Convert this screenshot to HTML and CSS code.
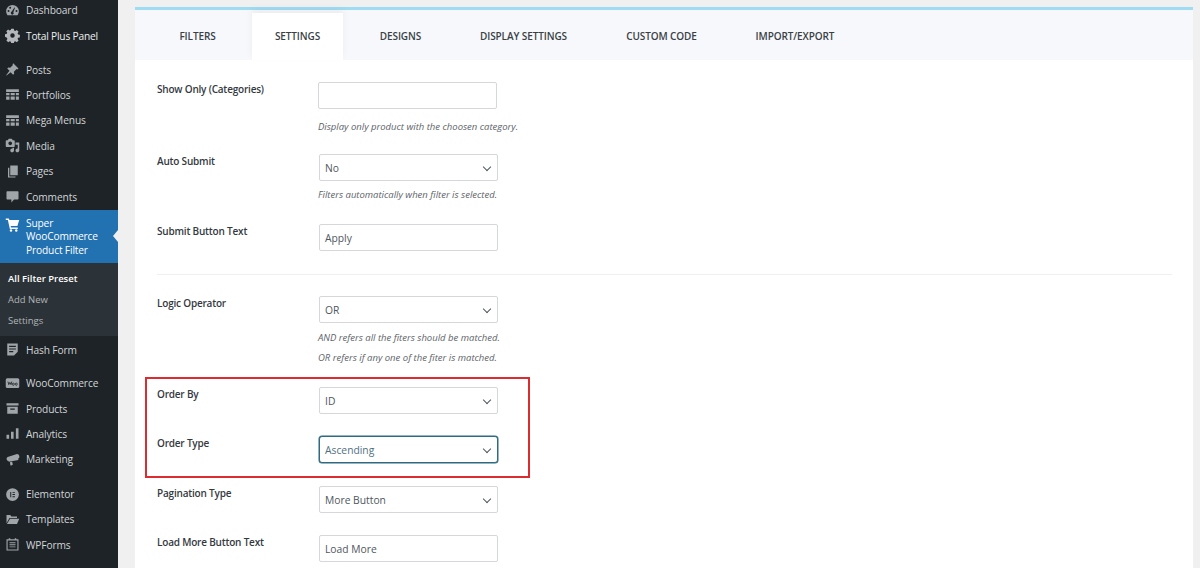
FILE: index.html
```html
<!DOCTYPE html>
<html lang="en">
<head>
<meta charset="utf-8">
<title>Super WooCommerce Product Filter</title>
<link rel="stylesheet" href="styles.css">
</head>
<body>
<div class="page">
<nav class="sidebar">
  <ul class="menu">
    <li class="item first"><svg class="ico" viewBox="0 0 20 20"><path fill-rule="evenodd" d="M10 2.500a8.500 8.500 0 0 0-8.500 8.500c0 2 .7 3.800 1.800 5.200h13.400c1.100-1.400 1.800-3.200 1.800-5.200A8.500 8.500 0 0 0 10 2.500zM4.700 12a1.300 1.300 0 1 1 0-2.600 1.300 1.300 0 0 1 0 2.600zm2.200-4.300a1.300 1.300 0 1 1 0-2.600 1.300 1.300 0 0 1 0 2.600zM10 15.500a2.200 2.200 0 0 1-1-4.200l3.600-5.400.8.400-2.300 5.900A2.200 2.200 0 0 1 10 15.500zm5.300-3.500a1.300 1.300 0 1 1 0-2.600 1.300 1.300 0 0 1 0 2.600z"/></svg><span>Dashboard</span></li>
    <li class="item bright"><svg class="ico" viewBox="0 0 20 20"><path fill-rule="evenodd" d="M8.300 1h3.400l.5 2.400 1.500.6 2-1.300 2.400 2.400-1.300 2 .6 1.500 2.400.5v3.400l-2.400.5-.6 1.500 1.300 2-2.400 2.400-2-1.300-1.500.6-.5 2.400H8.300l-.5-2.400-1.500-.6-2 1.300-2.400-2.400 1.300-2-.6-1.500L0 11.700V8.300l2.400-.5.6-1.500-1.300-2 2.400-2.400 2 1.300 1.500-.6zM10 7a3 3 0 1 0 0 6 3 3 0 0 0 0-6z"/></svg><span>Total Plus Panel</span></li>
    <li class="item sep"><svg class="ico" viewBox="0 0 20 20"><path d="M11 1.500l7 7-1.500 1.500-1-.6-3.700 3.700.4 2.500-1.400 1.400-3.200-3.200L2 18l-.5-.5 4.500-5.800-3-3L4.400 7.300l2.500.4 3.700-3.700-.6-1z"/></svg><span>Posts</span></li>
    <li class="item"><svg class="ico" viewBox="0 0 20 20"><path d="M1.500 3h17v3.500h-17zM1.500 8H6v3H1.500zm6 0H13v3H7.500zM14.500 8h4v3h-4zM1.500 12.500H6V17H1.500zm6 0H13V17H7.500zm7 0h4V17h-4z"/></svg><span>Portfolios</span></li>
    <li class="item"><svg class="ico" viewBox="0 0 20 20"><path d="M1.500 3h17v3.500h-17zM1.500 8H6v3H1.500zm6 0H13v3H7.500zM14.500 8h4v3h-4zM1.500 12.500H6V17H1.500zm6 0H13V17H7.500zm7 0h4V17h-4z"/></svg><span>Mega Menus</span></li>
    <li class="item"><svg class="ico" viewBox="0 0 20 20"><path fill-rule="evenodd" d="M13 11V4c0-.55-.45-1-1-1h-1.670L9 1H5L3.670 3H2c-.55 0-1 .45-1 1v7c0 .55.45 1 1 1h10c.55 0 1-.45 1-1zM7 4.500c1.380 0 2.500 1.120 2.500 2.500S8.380 9.500 7 9.500 4.500 8.380 4.500 7 5.620 4.500 7 4.500zM14 6h5v10.500c0 1.380-1.120 2.500-2.500 2.500S14 17.880 14 16.500s1.120-2.500 2.500-2.500c.17 0 .34.02.5.050V9h-3V6zm-4 8.050V13h2v3.500c0 1.380-1.120 2.500-2.500 2.500S7 17.880 7 16.500 8.120 14 9.500 14c.17 0 .34.02.5.050z"/></svg><span>Media</span></li>
    <li class="item"><svg class="ico" viewBox="0 0 20 20"><path d="M7 2h10v13H7zM4 5h1.800v11.500H14V18H4z"/></svg><span>Pages</span></li>
    <li class="item"><svg class="ico" viewBox="0 0 20 20"><path d="M3 3h14a1 1 0 0 1 1 1v9a1 1 0 0 1-1 1h-5l-3.500 4v-4H3a1 1 0 0 1-1-1V4a1 1 0 0 1 1-1z"/></svg><span>Comments</span></li>
    <li class="current">
      <svg class="ico" viewBox="0 0 20 20"><path d="M1 2h4l1 2h13l-2.500 8H7.500l.6 2H17v2H6.500L3.800 4H1z"/><circle cx="8" cy="18" r="1.600"/><circle cx="15" cy="18" r="1.600"/></svg>
      <span>Super WooCommerce Product Filter</span>
      <i class="notch"></i>
    </li>
    <li class="submenu">
      <a class="sub active">All Filter Preset</a>
      <a class="sub">Add New</a>
      <a class="sub">Settings</a>
    </li>
    <li class="item hash"><svg class="ico" viewBox="0 0 20 20"><path d="M3 2h14v11l-5 5H3zm2.500 3v1.500h9V5zm0 3.500V10h9V8.500zm0 3.500v1.500H11V12z" fill-rule="evenodd"/></svg><span>Hash Form</span></li>
    <li class="item sep2"><svg class="ico" viewBox="0 0 20 20"><rect x="1" y="3" width="18" height="13" rx="2"/><path d="M4 7.500l1 4 1.500-3 1.500 3 1-4M11 9.500a1.200 1.500 0 1 0 .01 0M15 9.500a1.200 1.500 0 1 0 .01 0" class="woo-mark"/></svg><span>WooCommerce</span></li>
    <li class="item"><svg class="ico" viewBox="0 0 20 20"><path d="M2 3h16v3H2zM3 7.500h14V17H3zm4 2.500v1.800h6V10z" fill-rule="evenodd"/></svg><span>Products</span></li>
    <li class="item"><svg class="ico" viewBox="0 0 20 20"><path d="M2 11.500h3.500V17H2zM8 7.500h3.500V17H8zM14.500 3H18v14h-3.500z"/></svg><span>Analytics</span></li>
    <li class="item"><svg class="ico" viewBox="0 0 20 20"><path d="M16 2.500a3.500 3.500 0 0 1 1.500 6.500l.5 1.500L5 13l-.5-1A3 3 0 0 1 3.500 6.500zM6.500 13.500l3-.6 1 3.600-2 1.500H7.300z"/></svg><span>Marketing</span></li>
    <li class="item sep3"><svg class="ico" viewBox="0 0 20 20"><path fill-rule="evenodd" d="M10 1.500a8.500 8.500 0 1 0 0 17 8.500 8.500 0 0 0 0-17zM7 6.500h1.300v7H7zm3 0h3.200v1.300H10zm0 2.900h3.200v1.300H10zm0 2.800h3.200v1.300H10z"/></svg><span>Elementor</span></li>
    <li class="item"><svg class="ico" viewBox="0 0 20 20"><path d="M2 4h5l1.500 2H16v2H6L2 15zM6.800 9H19l-3 7H2.500z"/></svg><span>Templates</span></li>
    <li class="item"><svg class="ico" viewBox="0 0 20 20"><path fill-rule="evenodd" d="M2 3h3V1.800h2V3h6V1.800h2V3h3v15H2zm1.500 1.500v12h13v-12zM6 7h8v1.300H6zm0 2.700h8V11H6zm0 2.800h8v1.300H6z"/></svg><span>WPForms</span></li>
  </ul>
</nav>

<main class="content">
  <section class="panel">
    <div class="tabs">
      <a class="tab t1">FILTERS</a>
      <a class="tab t2 on">SETTINGS</a>
      <a class="tab t3">DESIGNS</a>
      <a class="tab t4">DISPLAY SETTINGS</a>
      <a class="tab t5">CUSTOM CODE</a>
      <a class="tab t6">IMPORT/EXPORT</a>
    </div>
    <div class="form">
      <div class="row r-show">
        <label class="lbl">Show Only (Categories)</label>
        <div class="ctl">
          <div class="field narrow"></div>
          <p class="hint">Display only product with the choosen category.</p>
        </div>
      </div>
      <div class="row r-auto">
        <label class="lbl">Auto Submit</label>
        <div class="ctl">
          <div class="field select">No</div>
          <p class="hint h-tight">Filters automatically when filter is selected.</p>
        </div>
      </div>
      <div class="row r-text">
        <label class="lbl">Submit Button Text</label>
        <div class="ctl"><div class="field">Apply</div></div>
      </div>
      <hr class="rule">
      <div class="row r-logic">
        <label class="lbl">Logic Operator</label>
        <div class="ctl">
          <div class="field select">OR</div>
          <p class="hint h-tight">AND refers all the fiters should be matched.</p>
          <p class="hint h-second">OR refers if any one of the fiter is matched.</p>
        </div>
      </div>
      <div class="row r-orderby">
        <label class="lbl">Order By</label>
        <div class="ctl"><div class="field select">ID</div></div>
      </div>
      <div class="row r-ordertype">
        <label class="lbl">Order Type</label>
        <div class="ctl"><div class="field select focus">Ascending</div></div>
      </div>
      <div class="row r-pag">
        <label class="lbl">Pagination Type</label>
        <div class="ctl"><div class="field select">More Button</div></div>
      </div>
      <div class="row r-more">
        <label class="lbl">Load More Button Text</label>
        <div class="ctl"><div class="field">Load More</div></div>
      </div>
    </div>
    <div class="callout"></div>
  </section>
</main>
</div>
</body>
</html>
```

FILE: styles.css
```css
* { box-sizing: border-box; }
html, body { margin: 0; height: 100%; overflow: hidden; }
body {
  background: #f0f0f1;
  font-family: "Open Sans", "Noto Sans", sans-serif;
  font-size: 10px;
  color: #3c434a;
}
.page { display: flex; height: 568px; overflow: hidden; }

.sidebar { width: 118px; flex: none; background: #1d2327; color: #d5d7d9; }
.menu { list-style: none; margin: -2.700px 0 0; padding: 0; }
.item {
  display: flex;
  align-items: center;
  height: 25.400px;
  padding-left: 5px;
  font-size: 10.200px;
  letter-spacing: -.12px;
  color: #d3d5d7;
}
.item.bright { color: #eef0f1; height: 26px; letter-spacing: -.2px; }
.item.sep { margin-top: 8.200px; }
.item.sep3 { margin-top: 9.300px; }
.item.hash { height: 27px; }
.item.sep2 { margin-top: 7.300px; }
.ico { width: 15px; height: 15px; flex: none; margin-right: 6px; fill: #a0a5aa; }
.bright .ico { fill: #b4b8bc; }
.woo-mark { fill: none; stroke: #1d2327; stroke-width: 1.100; }
.current {
  position: relative;
  display: flex;
  align-items: flex-start;
  height: 53px;
  margin-top: .6px;
  padding: 7px 10px 0 5px;
  background: #2271b1;
  color: #fff;
  font-size: 10.200px;
  letter-spacing: -.15px;
  line-height: 13.500px;
}
.current .ico { fill: #fff; }
.notch {
  position: absolute;
  right: 0;
  top: 20px;
  border: 6px solid transparent;
  border-right-color: #f0f0f1;
  border-left-width: 0;
  border-right-width: 5px;
}
.submenu {
  display: flex;
  flex-direction: column;
  height: 73.400px;
  padding-top: 5px;
  background: #2c3338;
}
.sub { height: 21px; line-height: 21px; padding-left: 8px; font-size: 9.500px; color: #b0b4b7; }
.sub.active { color: #fff; font-weight: 600; }

.content { flex: 1; min-width: 0; padding: 7px 7px 0 17px; }
.panel { position: relative; background: #fff; border-top: 3px solid #9fdcf2; height: 600px; }
.tabs { display: flex; height: 50px; background: #f6f8fc; align-items: flex-end; }
.tab {
  display: flex;
  align-items: center;
  justify-content: center;
  height: 47px;
  padding-bottom: 1px;
  font-size: 10px;
  font-weight: 600;
  letter-spacing: -.1px;
  color: #3a3f45;
}
.t1 { width: 117px; padding-left: 8px; }
.t2 { width: 91px; }
.t3 { width: 115px; }
.t4 { width: 131px; }
.t5 { width: 145px; }
.t6 { width: 122px; }
.tab.on { background: #fff; box-shadow: 0 -4px 8px rgba(0,0,0,.05); }

.form { padding: 0 21px 0 22px; }
.row { display: flex; }
.lbl {
  width: 162px;
  flex: none;
  font-size: 10px;
  font-weight: 600;
  letter-spacing: -.2px;
  color: #34393f;
  line-height: 14px;
}
.ctl { width: 350px; }
.field {
  position: relative;
  width: 179px;
  height: 27px;
  border: 1px solid #d5d7da;
  border-radius: 2px;
  background: #fff;
  padding-left: 5px;
  line-height: 26px;
  font-size: 10.300px;
  color: #50575e;
}
.field.narrow { margin-left: -1px; }
.select::after {
  content: "";
  position: absolute;
  right: 7px;
  top: 9px;
  width: 5px;
  height: 5px;
  border-right: 1.300px solid #50575e;
  border-bottom: 1.300px solid #50575e;
  transform: rotate(45deg);
}
.focus { border-color: #2e6a80; box-shadow: 0 0 0 .5px #2e6a80; border-radius: 3px; color: #50707f; }
.hint { margin: 11px 0 0 -1px; font-size: 9.500px; font-style: italic; line-height: 13px; color: #5d6369; }
.h-tight { margin-top: 7px; }
.h-second { margin-top: 7px; }
.r-logic .h-tight { margin-top: 8px; }

.r-show { margin-top: 22px; height: 72px; }
.r-auto { height: 70px; }
.r-text { height: 50px; }
.rule { margin: 0; border: 0; border-top: 1px solid #eeeff1; }
.r-logic { margin-top: 21px; height: 91px; }
.r-orderby { height: 49px; }
.r-ordertype { height: 50px; }
.r-pag { height: 49px; }
.r-more { height: 40px; }

.callout {
  position: absolute;
  left: 10px;
  top: 367px;
  width: 385px;
  height: 101px;
  border: 2px solid #dd2c2f;
}
```
